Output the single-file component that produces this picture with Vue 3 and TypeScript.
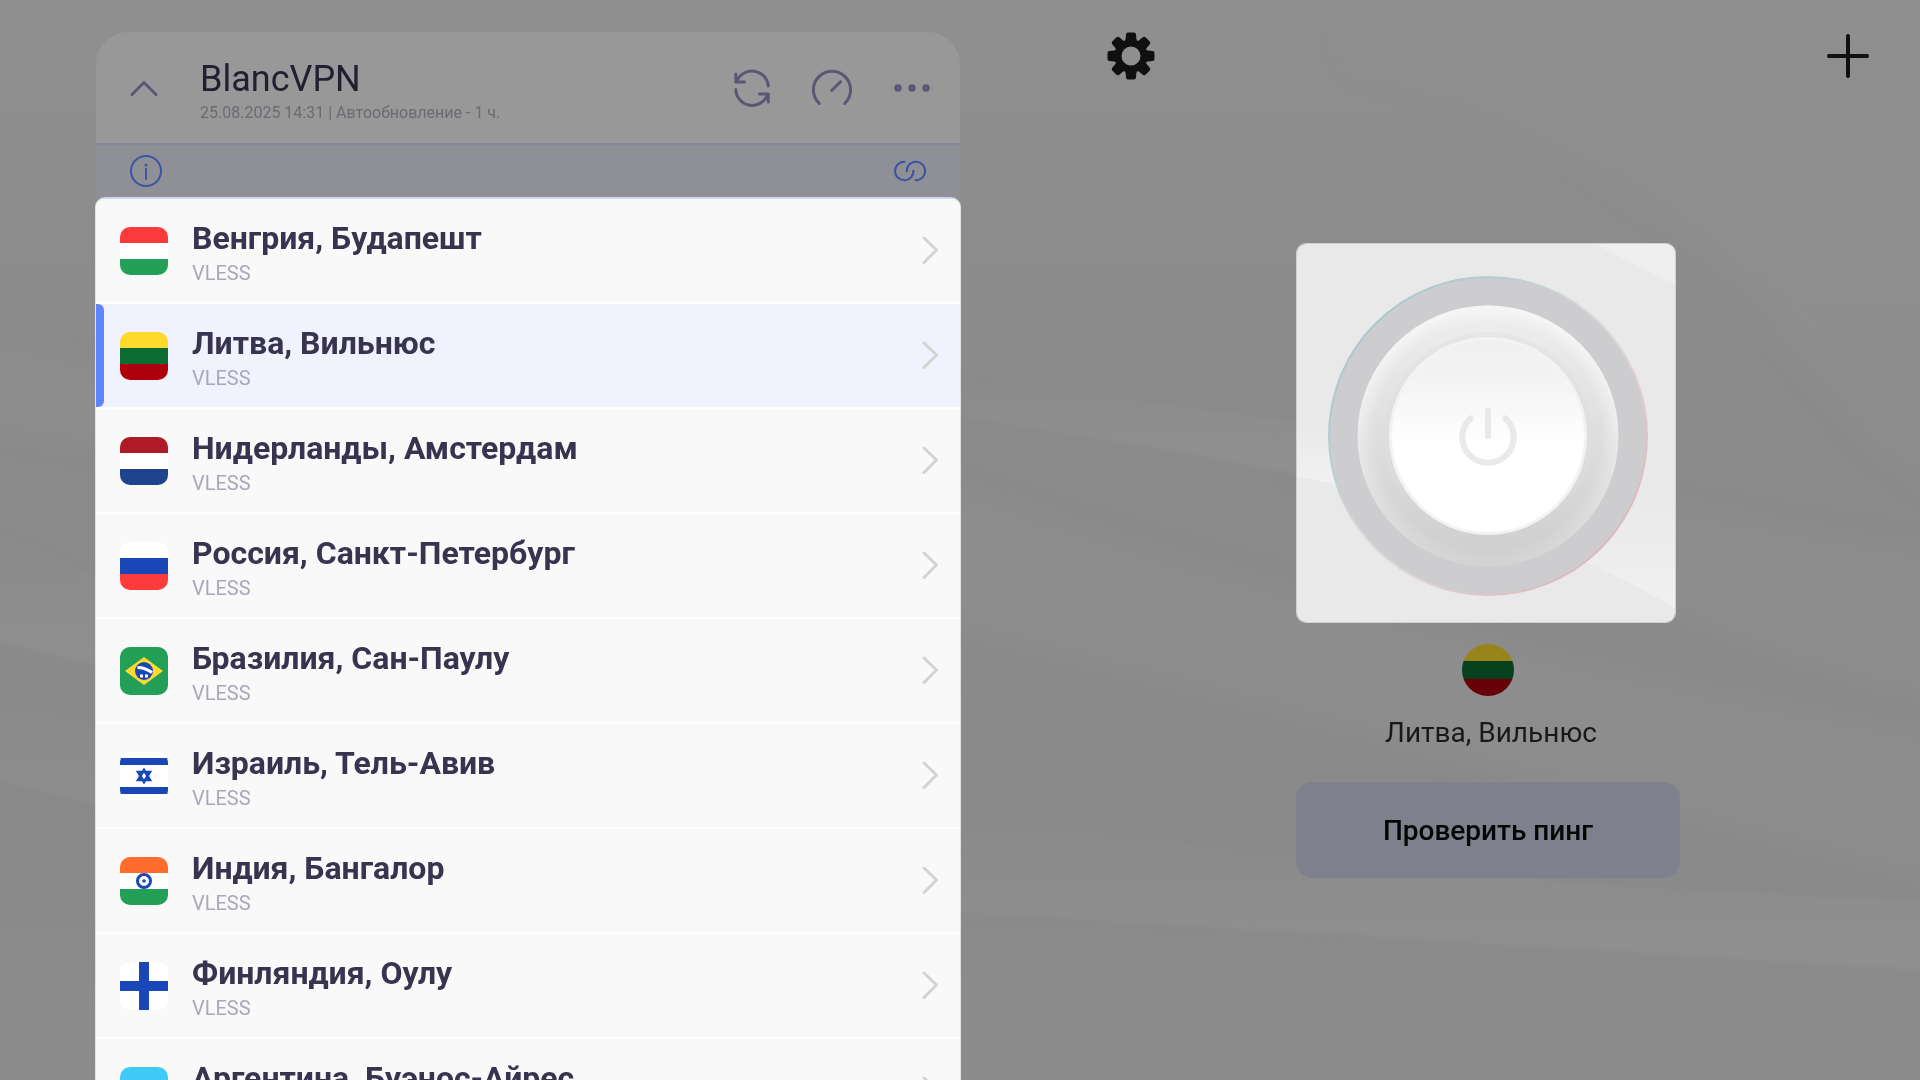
<script setup lang="ts">
import { ref } from 'vue'

interface Server {
  id: string
  name: string
  protocol: string
}

const servers: Server[] = [
  { id: 'hu', name: 'Венгрия, Будапешт', protocol: 'VLESS' },
  { id: 'lt', name: 'Литва, Вильнюс', protocol: 'VLESS' },
  { id: 'nl', name: 'Нидерланды, Амстердам', protocol: 'VLESS' },
  { id: 'ru', name: 'Россия, Санкт-Петербург', protocol: 'VLESS' },
  { id: 'br', name: 'Бразилия, Сан-Паулу', protocol: 'VLESS' },
  { id: 'il', name: 'Израиль, Тель-Авив', protocol: 'VLESS' },
  { id: 'in', name: 'Индия, Бангалор', protocol: 'VLESS' },
  { id: 'fi', name: 'Финляндия, Оулу', protocol: 'VLESS' },
  { id: 'ar', name: 'Аргентина, Буэнос-Айрес', protocol: 'VLESS' },
]

// Horizontal thirds for flags, top to bottom
const stripes: Record<string, string[]> = {
  hu: ['#fb3a3b', '#ffffff', '#249f58'],
  lt: ['#ffda2c', '#0b6b30', '#ae000c'],
  nl: ['#ae1a25', '#ffffff', '#1e448d'],
  ru: ['#ffffff', '#1a47b8', '#fb3a3b'],
  br: ['#249f58', '#249f58', '#249f58'],
  il: ['#ffffff', '#ffffff', '#ffffff'],
  in: ['#ff6c2d', '#ffffff', '#249f58'],
  fi: ['#ffffff', '#ffffff', '#ffffff'],
  ar: ['#3ecbf8', '#ffffff', '#3ecbf8'],
}

const selectedId = ref('lt')
const teeth = [0, 45, 90, 135, 180, 225, 270, 315]
</script>

<template>
  <main class="app">
    <svg class="backdrop" viewBox="0 0 1920 1080" preserveAspectRatio="none" aria-hidden="true">
      <defs>
        <linearGradient id="bgTop" x1="0" y1="0" x2="0" y2="1">
          <stop offset="0" stop-color="#8f8f8f" />
          <stop offset="0.350" stop-color="#8b8b8b" />
          <stop offset="0.800" stop-color="#8a8a8a" />
          <stop offset="1" stop-color="#8c8c8c" />
        </linearGradient>
        <linearGradient id="fadeUp" x1="0" y1="0" x2="0" y2="1">
          <stop offset="0" stop-color="#939393" stop-opacity="0" />
          <stop offset="1" stop-color="#939393" stop-opacity="0.800" />
        </linearGradient>
        <filter id="soft" x="-5%" y="-5%" width="110%" height="110%"><feGaussianBlur stdDeviation="12" /></filter>
        <filter id="edgeSoft" x="-5%" y="-5%" width="110%" height="110%"><feGaussianBlur stdDeviation="2" /></filter>
      </defs>
      <rect width="1920" height="1080" fill="url(#bgTop)" />
      <g filter="url(#soft)">
        <path d="M1350 60Q1640 150 1780 330T1960 480V-40H1350Z" fill="#8f8f8f" opacity="0.700" />
        <path d="M1300 440Q1700 520 1960 560V700Q1780 670 1600 570Q1450 500 1300 470Z" fill="#8f8f8f" opacity="0.700" />
        <path d="M900 470Q1300 620 1960 740V890Q1400 740 900 612Z" fill="#8f8f8f" opacity="0.600" />
        <path d="M-40 340L140 380V450L-40 420Z" fill="#8f8f8f" opacity="0.700" />
      </g>
      <g filter="url(#edgeSoft)">
        <path d="M900 370L1360 430V489Q1200 450 900 408Z" fill="url(#fadeUp)" />
        <path d="M900 800Q1400 890 1960 900V972L900 908Z" fill="url(#fadeUp)" opacity="0.800" />
        <path d="M-20 520L120 590V670L-20 637Z" fill="url(#fadeUp)" opacity="0.800" />
        <path d="M-20 690L120 730V810L-20 776Z" fill="url(#fadeUp)" opacity="0.600" />
      </g>
    </svg>

    <section class="subscription">
      <header class="sub-head">
        <button class="icon-btn collapse" type="button" aria-label="Свернуть">
          <svg width="28" height="18" viewBox="0 0 28 18" fill="none" stroke="#5b5675" stroke-width="3" stroke-linecap="round" stroke-linejoin="round">
            <path d="M2 15.500L14 3.500L26 15.500" />
          </svg>
        </button>
        <div class="sub-title">
          <h1>BlancVPN</h1>
          <p>25.08.2025 14:31 | Автообновление - 1 ч.</p>
        </div>
        <button class="icon-btn" type="button" aria-label="Обновить">
          <svg width="40" height="40" viewBox="0 0 40 40" fill="none" stroke="#5b5675" stroke-width="3" stroke-linecap="round" stroke-linejoin="round">
            <path d="M4.500 14A16.400 16.400 0 0 1 36.300 18M3.800 6V14H12.500M3.800 21.500A16.400 16.400 0 0 0 35.800 26M27.500 26H36.300V34" />
          </svg>
        </button>
        <button class="icon-btn" type="button" aria-label="Проверить скорость">
          <svg width="44" height="40" viewBox="0 0 44 40" fill="none" stroke="#5b5675" stroke-width="3" stroke-linecap="round">
            <path d="M9.300 35.500A18.600 18.600 0 1 1 34.700 35.500M21.700 22.500L30.500 13.700" />
          </svg>
        </button>
        <button class="icon-btn" type="button" aria-label="Ещё">
          <svg width="40" height="10" viewBox="0 0 40 10" fill="#615d78" stroke="#5b5675" stroke-width="2">
            <circle cx="6" cy="5" r="2.700" /><circle cx="20" cy="5" r="2.700" /><circle cx="34" cy="5" r="2.700" />
          </svg>
        </button>
      </header>

      <div class="sub-info">
        <button class="plain-btn" type="button" aria-label="Информация">
          <svg width="32" height="32" viewBox="0 0 32 32" fill="none" stroke="#3a53a3" stroke-width="2">
            <circle cx="16" cy="16" r="15" />
            <path d="M16 14V24" stroke-linecap="round" />
            <circle cx="16" cy="10" r="1.500" fill="#3a53a3" stroke="none" />
          </svg>
        </button>
        <button class="plain-btn" type="button" aria-label="Ссылка">
          <svg width="34" height="22" viewBox="0 0 34 22" fill="none" stroke="#3a53a3" stroke-width="2">
            <path d="M12.300 1.900A9.200 9.200 0 1 0 20.400 10M13.800 12A9.200 9.200 0 1 1 21.900 20.100" />
          </svg>
        </button>
      </div>

      <ul class="servers">
        <li v-for="s in servers" :key="s.id">
          <button
            class="server"
            :class="{ selected: s.id === selectedId }"
            type="button"
            :aria-pressed="s.id === selectedId"
            @click="selectedId = s.id"
          >
            <svg class="flag" viewBox="0 0 48 48" aria-hidden="true">
              <rect v-for="(c, i) in stripes[s.id]" :key="i" :y="i * 16" width="48" height="16" :fill="c" />
              <g v-if="s.id === 'br'">
                <path d="M24 10L43 24L24 38L5 24Z" fill="#ffda2c" />
                <circle cx="24" cy="24" r="9" fill="#1a47b8" />
                <path d="M17.500 20.500Q25 20.500 32 25.500" fill="none" stroke="#fff" stroke-width="3" />
                <rect x="20" y="27.500" width="3" height="3" fill="#fff" />
                <rect x="25" y="27.500" width="3" height="3" fill="#fff" />
              </g>
              <g v-else-if="s.id === 'il'">
                <path d="M0 6H48V13H0ZM0 35H48V42H0Z" fill="#1a47b8" />
                <path d="M24 18L30 28H18ZM24 30L18 20H30Z" fill="none" stroke="#1a47b8" stroke-width="2.500" />
              </g>
              <g v-else-if="s.id === 'in'">
                <circle cx="24" cy="24" r="6.500" fill="#fff" stroke="#1a47b8" stroke-width="3" />
                <circle cx="24" cy="24" r="1.800" fill="#1a47b8" />
              </g>
              <path v-else-if="s.id === 'fi'" d="M19 0H29V19H48V29H29V48H19V29H0V19H19Z" fill="#1a47b8" />
              <circle v-else-if="s.id === 'ar'" cx="24" cy="24" r="5" fill="#ffda2c" />
            </svg>
            <span class="server-text">
              <span class="server-name">{{ s.name }}</span>
              <span class="server-proto">{{ s.protocol }}</span>
            </span>
            <svg class="chevron" width="18" height="28" viewBox="0 0 18 28" fill="none" stroke="#d3d3d3" stroke-width="3" stroke-linecap="round" stroke-linejoin="round" aria-hidden="true">
              <path d="M3 2L15.500 14L3 26.500" />
            </svg>
          </button>
        </li>
      </ul>
    </section>

    <section class="control">
      <nav class="toolbar">
        <button class="plain-btn" type="button" aria-label="Настройки">
          <svg width="48" height="48" viewBox="0 0 48 48">
            <g fill="#101010">
              <path
                v-for="a in teeth"
                :key="a"
                d="M16 11.500Q18.200 10 18.600 7L19 2.500Q19.200 0.500 21 0.500H27Q28.800 0.500 29 2.500L29.400 7Q29.800 10 32 11.500Z"
                :transform="`rotate(${a} 24 24)`"
              />
            </g>
            <circle cx="24" cy="24" r="13" fill="none" stroke="#101010" stroke-width="7" />
          </svg>
        </button>
        <button class="plain-btn" type="button" aria-label="Добавить">
          <svg width="44" height="44" viewBox="0 0 44 44" stroke="#101010" stroke-width="4" stroke-linecap="round">
            <path d="M22 2V42M3 22H41" />
          </svg>
        </button>
      </nav>

      <div class="connect">
        <div class="spot">
          <svg class="spot-light" viewBox="0 0 380 380" preserveAspectRatio="none" aria-hidden="true">
            <defs>
              <linearGradient id="glint" x1="0" y1="0" x2="0" y2="1">
                <stop offset="0" stop-color="#f2f2f2" stop-opacity="0" />
                <stop offset="1" stop-color="#f2f2f2" />
              </linearGradient>
            </defs>
            <rect width="380" height="380" fill="#e9e9e9" />
            <path d="M0 180L60 200V245L0 234Z" fill="url(#glint)" />
            <path d="M230 270L380 250V366Q320 330 230 295Z" fill="url(#glint)" opacity="0.800" />
            <path d="M300 0H380V40Q345 25 300 0Z" fill="#eeeeee" />
          </svg>
          <button class="power plain-btn" type="button" aria-label="Подключить">
            <svg width="320" height="320" viewBox="0 0 320 320">
              <defs>
                <linearGradient id="edge" x1="0.100" y1="0.100" x2="0.900" y2="0.900">
                  <stop offset="0" stop-color="#a9c6cc" />
                  <stop offset="0.250" stop-color="#b9ced3" />
                  <stop offset="0.450" stop-color="#dadadb" />
                  <stop offset="0.600" stop-color="#e0d6d7" />
                  <stop offset="1" stop-color="#dcb4b6" />
                </linearGradient>
                <linearGradient id="bowl" x1="0" y1="0" x2="0" y2="1">
                  <stop offset="0" stop-color="#efefef" />
                  <stop offset="0.500" stop-color="#dedede" />
                  <stop offset="1" stop-color="#cdcdcd" />
                </linearGradient>
                <radialGradient id="bowlRim">
                  <stop offset="0.860" stop-color="#fff" stop-opacity="0" />
                  <stop offset="1" stop-color="#fff" stop-opacity="0.500" />
                </radialGradient>
                <linearGradient id="rimFade" x1="0" y1="0" x2="0" y2="1">
                  <stop offset="0.350" stop-color="#fff" />
                  <stop offset="0.900" stop-color="#fff" stop-opacity="0.300" />
                </linearGradient>
                <mask id="rimMask"><rect width="320" height="320" fill="url(#rimFade)" /></mask>
                <linearGradient id="collar" x1="0" y1="0" x2="0" y2="1">
                  <stop offset="0" stop-color="#e6e6e6" />
                  <stop offset="0.500" stop-color="#dedede" />
                  <stop offset="0.850" stop-color="#dedede" stop-opacity="0" />
                </linearGradient>
                <linearGradient id="cap" x1="0" y1="0" x2="0" y2="1">
                  <stop offset="0" stop-color="#f0f0f0" />
                  <stop offset="0.200" stop-color="#f3f3f3" />
                  <stop offset="0.550" stop-color="#fff" />
                </linearGradient>
              </defs>
              <circle cx="160" cy="160" r="159" fill="#cdcdd0" stroke="url(#edge)" stroke-width="2" />
              <circle cx="160" cy="160" r="130.500" fill="url(#bowl)" />
              <circle cx="160" cy="160" r="130.500" fill="url(#bowlRim)" mask="url(#rimMask)" />
              <circle cx="160" cy="160" r="104" fill="url(#collar)" />
              <circle cx="160" cy="160" r="99" fill="#f3f3f3" />
              <circle cx="160" cy="160" r="96" fill="url(#cap)" />
              <path d="M142.300 142.500A25.700 25.700 0 1 0 177.700 142.500M160 134.500V160" fill="none" stroke="#e9e9e9" stroke-width="6" stroke-linecap="round" />
            </svg>
          </button>
        </div>
        <svg class="current-flag" viewBox="0 0 52 52" aria-hidden="true">
          <rect width="52" height="18" fill="#99831b" />
          <rect y="17" width="52" height="18" fill="#07401d" />
          <rect y="35" width="52" height="17" fill="#680007" />
        </svg>
        <p class="current-name">Литва, Вильнюс</p>
        <button class="ping" type="button">Проверить пинг</button>
      </div>
    </section>
  </main>
</template>

<style>
body {
  margin: 0;
  background: #8c8c8c;
}
</style>

<style scoped>
.app {
  position: relative;
  display: flex;
  height: 100vh;
  overflow: hidden;
  font-family: Roboto, "Noto Sans", sans-serif;
}

.backdrop {
  position: absolute;
  inset: 0;
  width: 100%;
  height: 100%;
}

button {
  margin: 0;
  padding: 0;
  border: 0;
  background: none;
  font-family: inherit;
  color: inherit;
  cursor: pointer;
}

svg {
  display: block;
  flex: none;
}

/* Subscription panel */
.subscription {
  position: relative;
  width: 45%;
  margin-left: 5%;
  margin-top: 32px;
}

.sub-head {
  display: flex;
  align-items: center;
  height: 111px;
  padding-right: 8px;
  border-radius: 32px 32px 0 0;
  background: #989898;
}

.icon-btn {
  display: flex;
  align-items: center;
  justify-content: center;
  width: 80px;
  height: 80px;
}

.collapse {
  width: 96px;
  margin-right: 8px;
}

.sub-title {
  flex: 1;
  padding-top: 5px;
}

.sub-title h1 {
  margin: 0 0 3px;
  font-size: 36px;
  line-height: 42px;
  font-weight: 400;
  color: #211f30;
}

.sub-title p {
  margin: 0;
  font-size: 16px;
  line-height: 20px;
  color: #6b6a73;
}

.sub-info {
  display: flex;
  align-items: center;
  justify-content: space-between;
  height: 52px;
  padding: 0 33px 0 34px;
  border-top: 2px solid #838a9b;
  background: #8f9096;
}

/* Server list */
.servers {
  margin: 0 -1px;
  padding: 0;
  list-style: none;
  overflow: hidden;
  border: 1px solid #e2e2e2;
  border-top: 2px solid #cdd6f6;
  border-radius: 10px 10px 0 0;
  background: #fff;
}

.server {
  position: relative;
  display: flex;
  align-items: flex-start;
  width: 100%;
  height: 103px;
  margin-bottom: 2px;
  padding: 0 21px 0 24px;
  background: #f9f9f9;
  text-align: left;
}

.server.selected {
  background: #f0f3fd;
}

.server.selected::before {
  content: "";
  position: absolute;
  left: 0;
  top: 0;
  bottom: 0;
  width: 8px;
  border-radius: 0 6px 6px 0;
  background: #5f84ff;
}

.flag {
  width: 48px;
  height: 48px;
  margin: 28px 24px 0 0;
  border-radius: 10px;
}

.server-text {
  display: flex;
  flex: 1;
  flex-direction: column;
  gap: 4px;
  padding-top: 20px;
}

.server-name {
  font-size: 32px;
  line-height: 38px;
  font-weight: 700;
  color: #38334f;
}

.server-proto {
  font-size: 20px;
  line-height: 24px;
  color: #a7a9b8;
}

.chevron {
  margin-top: 37px;
}

/* Connection side */
.control {
  position: relative;
  flex: 1;
  display: flex;
  flex-direction: column;
  padding: 32px 0 0 96px;
}

.toolbar {
  display: flex;
  align-items: center;
  justify-content: space-between;
  padding: 0 50px 0 51px;
}

.connect {
  display: flex;
  flex-direction: column;
  align-items: center;
  width: 384px;
  margin: 163px auto 0;
}

.spot {
  position: relative;
  align-self: flex-start;
  display: flex;
  align-items: center;
  justify-content: center;
  box-sizing: border-box;
  width: 380px;
  height: 380px;
  padding: 5px 0 0 4px;
  overflow: hidden;
  border: 1px solid #d0d0d0;
  border-radius: 10px;
}

.spot-light {
  position: absolute;
  inset: 0;
  width: 100%;
  height: 100%;
}

.power {
  position: relative;
  border-radius: 50%;
}

.current-flag {
  width: 52px;
  height: 52px;
  margin-top: 21px;
  border-radius: 50%;
}

.current-name {
  margin: 20px 0 32px;
  padding-left: 6px;
  font-size: 28px;
  line-height: 34px;
  color: #19191a;
}

.ping {
  width: 100%;
  height: 96px;
  padding-top: 2px;
  border-radius: 16px;
  background: #7e818d;
  font-size: 28px;
  line-height: 34px;
  font-weight: 500;
  color: #050506;
}
</style>
